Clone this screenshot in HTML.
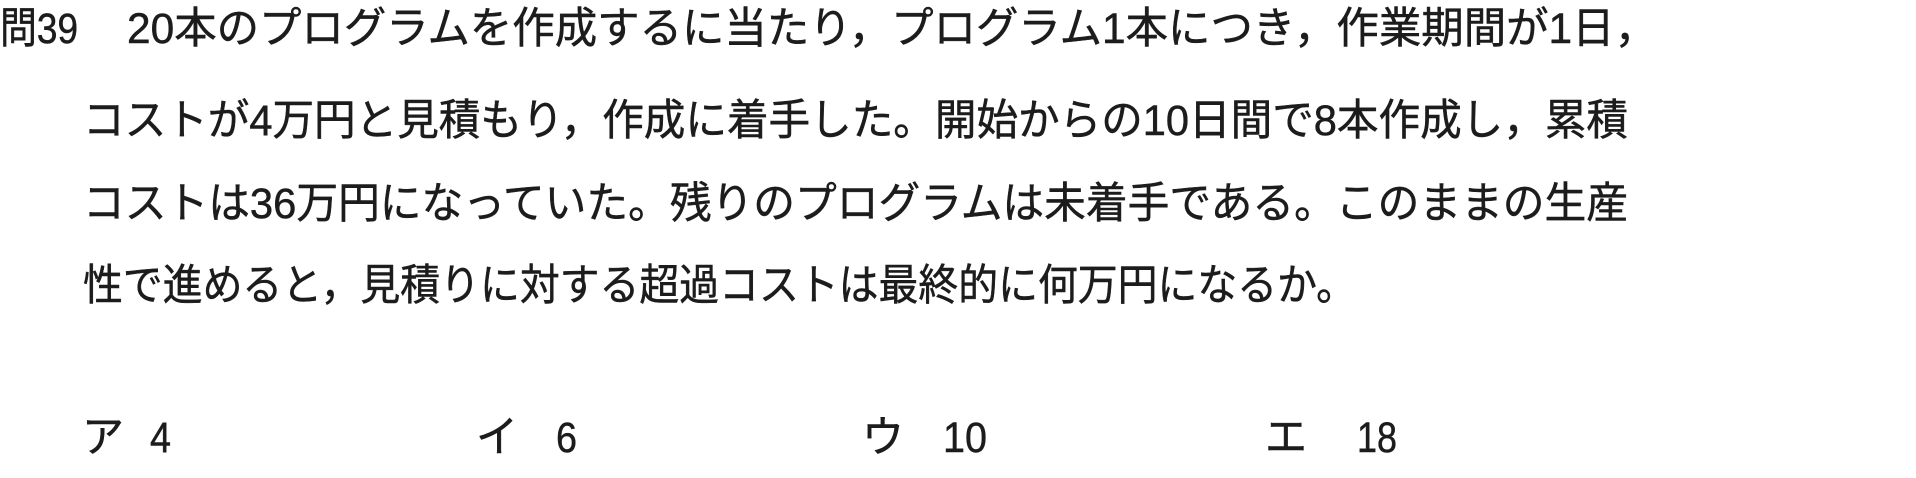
<!DOCTYPE html>
<html><head><meta charset="utf-8"><style>
html,body{margin:0;padding:0;background:#fff;width:1916px;height:478px;overflow:hidden}
svg{display:block}
text{font-family:"Liberation Sans","Noto Sans CJK JP",sans-serif;font-size:43px;fill:#1c1c1c;stroke:#1c1c1c;stroke-width:0.5}
</style></head><body>
<svg width="1916" height="478" viewBox="0 0 1916 478" xmlns="http://www.w3.org/2000/svg">
<text x="0" y="43" textLength="78" lengthAdjust="spacingAndGlyphs">問39</text>
<text x="127" y="43" textLength="1530" lengthAdjust="spacingAndGlyphs">20本のプログラムを作成するに当たり，プログラム1本につき，作業期間が1日，</text>
<text x="83" y="135" textLength="1545" lengthAdjust="spacingAndGlyphs">コストが4万円と見積もり，作成に着手した。開始からの10日間で8本作成し，累積</text>
<text x="83" y="218" textLength="1545" lengthAdjust="spacingAndGlyphs">コストは36万円になっていた。残りのプログラムは未着手である。このままの生産</text>
<text x="83" y="300" textLength="1273" lengthAdjust="spacingAndGlyphs">性で進めると，見積りに対する超過コストは最終的に何万円になるか。</text>
<text x="82" y="452" textLength="42" lengthAdjust="spacingAndGlyphs">ア</text>
<text x="150" y="452" textLength="21" lengthAdjust="spacingAndGlyphs">4</text>
<text x="476" y="452" textLength="42" lengthAdjust="spacingAndGlyphs">イ</text>
<text x="556" y="452" textLength="21" lengthAdjust="spacingAndGlyphs">6</text>
<text x="862" y="452" textLength="42" lengthAdjust="spacingAndGlyphs">ウ</text>
<text x="943" y="452" textLength="44" lengthAdjust="spacingAndGlyphs">10</text>
<text x="1265" y="452" textLength="42" lengthAdjust="spacingAndGlyphs">エ</text>
<text x="1357" y="452" textLength="40" lengthAdjust="spacingAndGlyphs">18</text>
</svg>
</body></html>
